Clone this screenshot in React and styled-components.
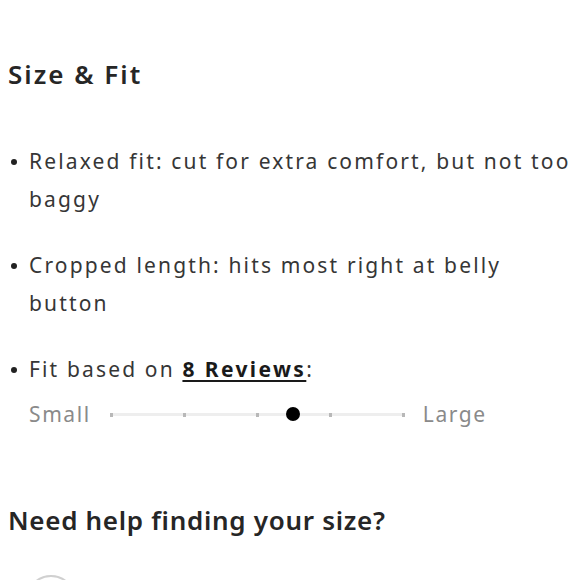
import React from "react";
import styled, { createGlobalStyle } from "styled-components";

const GlobalStyle = createGlobalStyle`
  html, body {
    margin: 0;
    padding: 0;
    background: #ffffff;
  }
  body {
    font-family: "Noto Sans", "Liberation Sans", sans-serif;
    color: #333333;
    overflow: hidden;
  }
`;

const fitPoints = [0, 1, 2, 3, 4];

const App = () => {
  return (
    <>
      <GlobalStyle />
      <StyledPage>
        <StyledHeading $spacing="2px">Size &amp; Fit</StyledHeading>
        <StyledList>
          <StyledItem>Relaxed fit: cut for extra comfort, but not too baggy</StyledItem>
          <StyledItem>Cropped length: hits most right at belly button</StyledItem>
          <StyledItem>
            Fit based on <ReviewsLink href="#">8 Reviews</ReviewsLink>:
          </StyledItem>
        </StyledList>
        <FitRow>
          <FitLabel>Small</FitLabel>
          <FitTrack>
            {fitPoints.map((p) => (
              <FitTick key={p} style={{ left: `${p * 25}%` }} />
            ))}
            <FitThumb style={{ left: "62.5%" }} />
          </FitTrack>
          <FitLabel>Large</FitLabel>
        </FitRow>
        <HelpHeading $spacing="0.7px">Need help finding your size?</HelpHeading>
        <HelpIcon />
      </StyledPage>
    </>
  );
};

export default App;

const StyledPage = styled.div`
  display: flex;
  flex-direction: column;
  width: 580px;
  height: 580px;
  padding: 59px 0 0 8px;
  box-sizing: border-box;
  overflow: hidden;
`;

const StyledHeading = styled.h2`
  margin: 0;
  font-size: 26px;
  line-height: 30px;
  font-weight: 600;
  color: #262626;
  letter-spacing: ${(p) => p.$spacing};
`;

const StyledList = styled.ul`
  list-style: none;
  margin: 53px 0 0;
  padding: 0 0 0 21px;
  width: 543px;
  display: flex;
  flex-direction: column;
  gap: 28px;
`;

const StyledItem = styled.li`
  position: relative;
  font-size: 21px;
  line-height: 38px;
  letter-spacing: 2.15px;
  color: #363636;

  &::before {
    content: "";
    position: absolute;
    left: -18px;
    top: 17px;
    width: 6px;
    height: 6px;
    border-radius: 50%;
    background: #222222;
  }
`;

const ReviewsLink = styled.a`
  color: #1a1a1a;
  font-weight: 700;
  letter-spacing: 2.4px;
  text-decoration: underline;
  text-underline-offset: 3px;
  text-decoration-thickness: 2px;
`;

const FitRow = styled.div`
  display: flex;
  align-items: center;
  gap: 20px;
  margin: 12px 0 0 21px;
  height: 30px;
`;

const FitLabel = styled.span`
  font-size: 21px;
  letter-spacing: 1.6px;
  color: #8a8a8a;
`;

const FitTrack = styled.div`
  position: relative;
  width: 292px;
  height: 3px;
  background: #eeeeee;
`;

const FitTick = styled.span`
  position: absolute;
  top: 0;
  width: 3px;
  height: 4px;
  margin-left: -1px;
  background: #b8b8b8;
`;

const FitThumb = styled.span`
  position: absolute;
  top: 50%;
  width: 14px;
  height: 14px;
  border-radius: 50%;
  background: #000000;
  transform: translate(-50%, -50%);
`;

const HelpHeading = styled.h3`
  margin: 77px 0 0;
  font-size: 26px;
  line-height: 30px;
  font-weight: 600;
  color: #262626;
  letter-spacing: ${(p) => p.$spacing};
`;

const HelpIcon = styled.div`
  width: 50px;
  height: 50px;
  margin: 40px 0 0 18px;
  border-radius: 50%;
  border: 2px solid #d0d0d0;
  box-sizing: border-box;
  flex-shrink: 0;
`;
